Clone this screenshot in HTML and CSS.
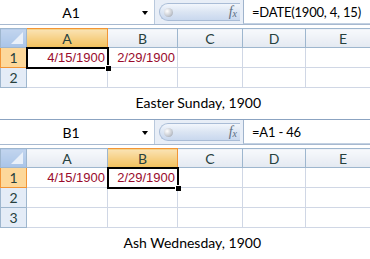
FILE: index.html
```html
<!DOCTYPE html>
<html>
	<head>
		<title>Easter and Ash Wednesday, 1900</title>
		<link rel="stylesheet" href="styles.css">
	</head>
	<body>
		<div class="book first">
			<div class="fbar">
				<div class="namebox"><span class="ref">A1</span><span class="drop"></span></div>
				<div class="pill"><span class="ball"></span><span class="fx">f<sub>x</sub></span></div>
				<div class="formula">=DATE(1900, 4, 15)</div>
			</div>
			<table class="grid">
				<colgroup><col class="c0"><col class="ca"><col class="cb"><col class="cc"><col class="cd"><col class="ce"></colgroup>
				<tr><th class="corner"><span></span></th><th class="sel">A</th><th>B</th><th>C</th><th>D</th><th>E</th></tr>
				<tr><th class="sel">1</th><td class="date active">4/15/1900</td><td class="date">2/29/1900</td><td></td><td></td><td></td></tr>
				<tr><th>2</th><td></td><td></td><td></td><td></td><td></td></tr>
			</table>
		</div>
		<div class="caption">Easter Sunday, 1900</div>

		<div class="book">
			<div class="fbar">
				<div class="namebox"><span class="ref">B1</span><span class="drop"></span></div>
				<div class="pill"><span class="ball"></span><span class="fx">f<sub>x</sub></span></div>
				<div class="formula">=A1 - 46</div>
			</div>
			<table class="grid">
				<colgroup><col class="c0"><col class="ca"><col class="cb"><col class="cc"><col class="cd"><col class="ce"></colgroup>
				<tr><th class="corner"><span></span></th><th>A</th><th class="sel">B</th><th>C</th><th>D</th><th>E</th></tr>
				<tr><th class="sel">1</th><td class="date">4/15/1900</td><td class="date active">2/29/1900</td><td></td><td></td><td></td></tr>
				<tr><th>2</th><td></td><td></td><td></td><td></td><td></td></tr>
				<tr><th>3</th><td></td><td></td><td></td><td></td><td></td></tr>
			</table>
		</div>
		<div class="caption">Ash Wednesday, 1900</div>
	</body>
</html>
```

FILE: styles.css
```css
body {
	margin: 0;
	width: 370px;
	height: 259px;
	overflow: hidden;
	background: #fff;
	font-family: Lato, "Liberation Sans", sans-serif;
}
.book {
	width: 370px;
	overflow: hidden;
}
.first {
	margin-top: -1px;
}
.fbar {
	display: flex;
	height: 24px;
	border-top: 1px solid #8ba3c1;
	border-bottom: 1px solid #a7b9d0;
	background: #e8eef7;
}
.namebox {
	flex: none;
	width: 155px;
	display: flex;
	align-items: center;
	background: #fff;
	border-right: 1px solid #b9c9dd;
	box-sizing: border-box;
}
.ref {
	flex: 1;
	text-align: center;
	font-size: 14px;
	color: #000;
}
.drop {
	width: 0;
	height: 0;
	margin: 1px 6px 0 0;
	border-left: 3.5px solid transparent;
	border-right: 3.5px solid transparent;
	border-top: 4px solid #000;
}
.pill {
	flex: none;
	width: 80px;
	margin: 3px 0 3px 4px;
	display: flex;
	align-items: center;
	justify-content: space-between;
	border: 1px solid #a9bcd6;
	border-right: none;
	border-radius: 10px 0 0 10px;
	background: linear-gradient(#f2f6fc, #dbe5f3 50%, #c9d8ee);
}
.ball {
	width: 9px;
	height: 9px;
	margin-left: 4px;
	border-radius: 50%;
	background: radial-gradient(circle at 35% 35%, #fff, #c4c8cf 60%, #8d939c);
}
.fx {
	font-family: "Liberation Serif", serif;
	font-style: italic;
	font-size: 14px;
	color: #5e6e80;
	margin-right: 3px;
}
.fx sub {
	font-size: 10px;
	vertical-align: -1px;
}
.formula {
	flex: 1;
	min-width: 0;
	margin-left: 3px;
	padding-left: 8px;
	display: flex;
	align-items: center;
	white-space: nowrap;
	background: #fff;
	border-left: 1px solid #9fb3cc;
	border-bottom: 1px solid #c3d1e2;
	font-size: 13px;
	letter-spacing: -0.2px;
	color: #000;
}
.grid {
	margin-top: 3px;
	border-collapse: collapse;
	table-layout: fixed;
	width: 380px;
}
.c0 { width: 26px; }
.ca { width: 81px; }
.cb { width: 70px; }
.cc { width: 65px; }
.cd { width: 63px; }
.ce { width: 75px; }
.grid th,
.grid td {
	padding: 0;
	height: 19px;
	border: 1px solid #d0d7e5;
}
.grid th {
	font-weight: normal;
	font-size: 14px;
	color: #27413e;
	border-color: #9eb6ce;
	background: linear-gradient(#f7f9fc, #e4e9f1);
	text-align: center;
}
.grid tr:first-child th {
	height: 18px;
}
.grid tr th:first-child {
	background: #e4ecf7;
}
.grid th.sel {
	background: linear-gradient(#fae3b4, #f6cf82 55%, #f1c15e);
	border-color: #f29536;
}
.grid tr th.sel:first-child {
	background: #fdd89a;
}
.grid tr th.corner {
	position: relative;
	background: linear-gradient(#c2d5ee, #a9c4e8);
}
.corner span {
	position: absolute;
	right: 3px;
	bottom: 3px;
	width: 0;
	height: 0;
	border-left: 12px solid transparent;
	border-bottom: 12px solid #e9f0f9;
}
.date {
	font-family: "Liberation Sans", sans-serif;
	font-size: 13px;
	color: #9a0a2c;
	text-align: right;
}
.grid td.date {
	padding-right: 2px;
}
.active {
	position: relative;
	outline: 2px solid #000;
	outline-offset: -1px;
}
.active::after {
	content: "";
	position: absolute;
	right: -4px;
	bottom: -4px;
	width: 5px;
	height: 5px;
	background: #000;
	border: 1px solid #fff;
	border-width: 1px 0 0 1px;
}
.caption {
	height: 31px;
	display: flex;
	align-items: center;
	justify-content: flex-end;
	padding-right: 109px;
	padding-bottom: 3px;
	box-sizing: border-box;
	font-size: 14px;
	color: #000;
}
```
